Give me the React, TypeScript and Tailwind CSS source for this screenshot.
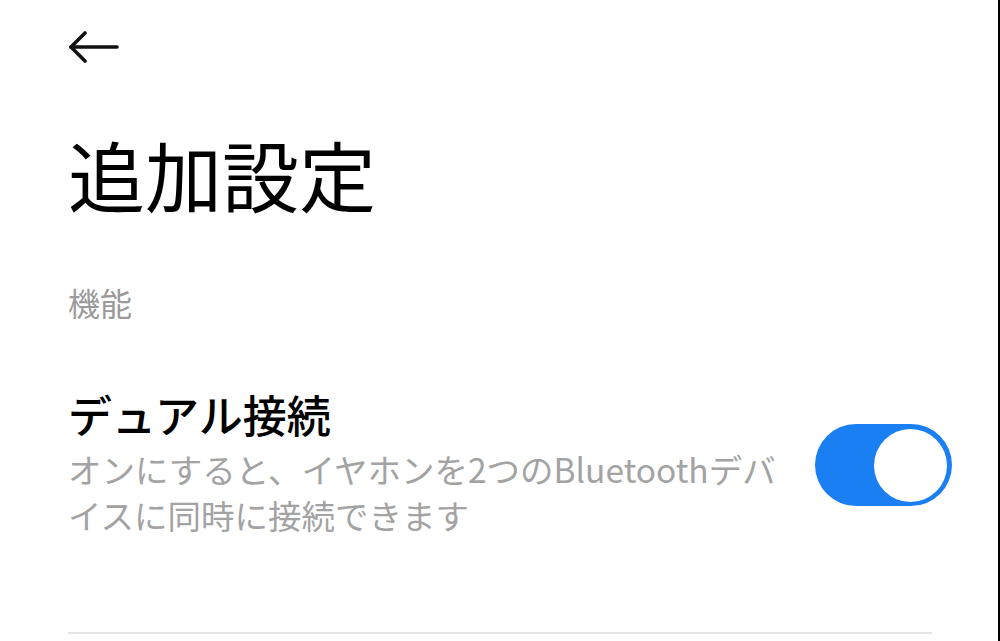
import React from "react";

export default function App() {
  return (
    <div
      className="w-[1000px] h-[641px] bg-white flex overflow-hidden"
      style={{ fontFamily: '"Noto Sans CJK JP", "Noto Sans", sans-serif' }}
    >
      <div className="flex-1 flex flex-col pl-[68px] pr-[66px] min-w-0">
        <div className="h-[94px] flex items-center">
          <svg width="52" height="32" viewBox="0 0 52 32" fill="none" stroke="#111" strokeWidth="3.6" strokeLinecap="round" strokeLinejoin="round">
            <path d="M49 16H3" />
            <path d="M17 2L3 16L17 30" />
          </svg>
        </div>
        <h1 className="text-[77px] leading-none text-black mt-[41px]">追加設定</h1>
        <div className="text-[32px] leading-none text-[#9a9a9a] mt-[74px]">機能</div>
        <div className="flex items-center mt-[74px] mr-[-20px]">
          <div className="flex-1 flex flex-col min-w-0">
            <div className="text-[44px] leading-none text-black font-medium">デュアル接続</div>
            <div className="text-[33.5px] leading-[46px] text-[#a3a3a3] mt-[10px] whitespace-nowrap">
              オンにすると、イヤホンを2つのBluetoothデバ
              <br />
              イスに同時に接続できます
            </div>
          </div>
          <div className="w-[137px] h-[82px] rounded-full bg-[#1a7ff2] flex items-center justify-end pr-[5px] shrink-0">
            <div className="w-[73px] h-[73px] rounded-full bg-white" />
          </div>
        </div>
        <div className="mt-auto mb-[7px] h-[2px] bg-[#e3e3e3]" />
      </div>
      <div className="w-[2px] h-full bg-black" />
    </div>
  );
}
